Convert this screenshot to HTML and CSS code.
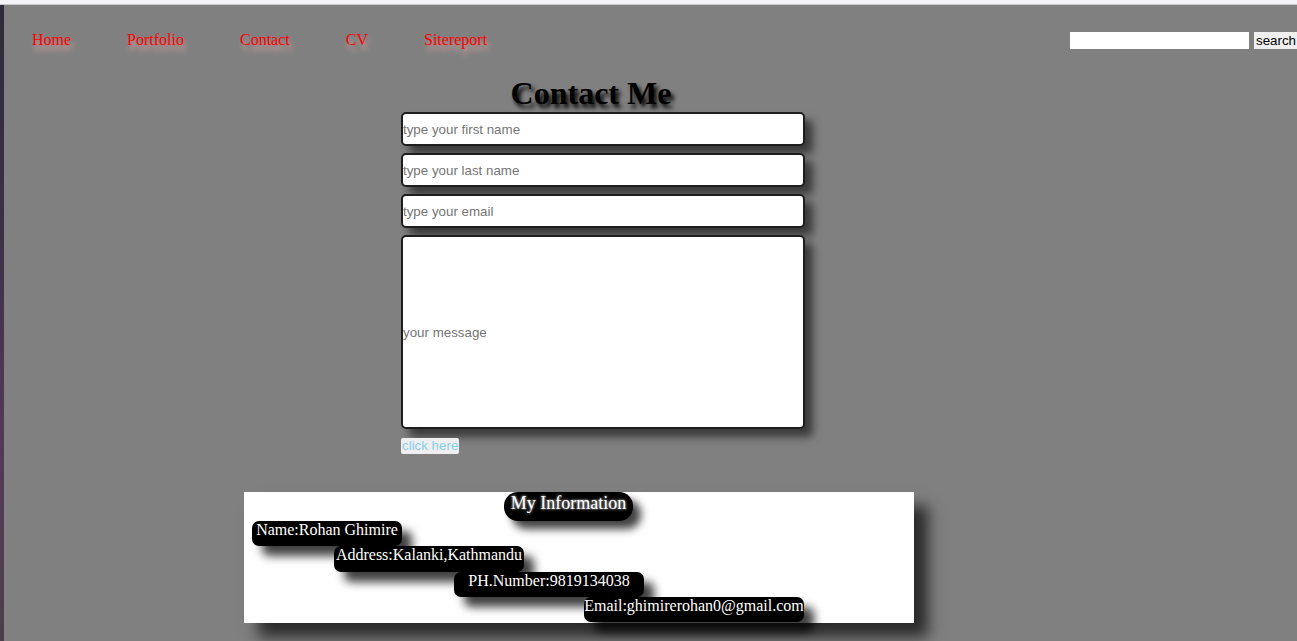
FILE: index.html
```html
<!DOCTYPE html>
<html>
<head>
<meta charset="utf-8">
<title>Contact Me</title>
<link rel="stylesheet" href="styles.css">
</head>
<body>
<div class="topstrip"></div>
<div class="page">
  <nav class="nav">
    <ul class="links">
      <li><a href="#">Home</a></li>
      <li><a href="#">Portfolio</a></li>
      <li><a href="#">Contact</a></li>
      <li><a href="#">CV</a></li>
      <li><a href="#">Sitereport</a></li>
    </ul>
    <form class="search">
      <input type="text" class="search-input">
      <button type="button" class="search-btn">search</button>
    </form>
  </nav>
  <section class="contact">
    <h1 class="title">Contact Me</h1>
    <form class="form">
      <input type="text" class="field" placeholder="type your first name">
      <input type="text" class="field" placeholder="type your last name">
      <input type="text" class="field" placeholder="type your email">
      <input type="text" class="field message" placeholder="your message">
      <button type="button" class="submit">click here</button>
    </form>
  </section>
  <section class="info">
    <div class="info-title">My Information</div>
    <div class="pill p-name">Name:Rohan Ghimire</div>
    <div class="pill p-addr">Address:Kalanki,Kathmandu</div>
    <div class="pill p-ph">PH.Number:9819134038</div>
    <div class="pill p-mail">Email:ghimirerohan0@gmail.com</div>
  </section>
</div>
</body>
</html>
```
FILE: styles.css
```css
html, body {
  margin: 0;
  padding: 0;
  height: 100%;
  overflow: hidden;
}
body {
  background: linear-gradient(180deg, #2f2a38 0%, #3a3145 35%, #533a56 70%, #4a4048 100%);
  font-family: "Liberation Serif", serif;
}
.topstrip {
  height: 4px;
  background: #f4f4f6;
  border-bottom: 1px solid #c9c9cc;
}
.page {
  margin-left: 4px;
  background: #808080;
  height: calc(100% - 5px);
  box-sizing: border-box;
  padding-top: 26px;
}
.nav {
  display: flex;
  align-items: center;
  justify-content: space-between;
}
.links {
  display: flex;
  list-style: none;
  margin: 0;
  padding: 0;
}
.links li {
  padding: 0 28px;
}
.links a {
  color: #ff0000;
  text-decoration: none;
  font-size: 16px;
  line-height: 18px;
  text-shadow: 2px 6px 5px #d8a0a0;
}
.search {
  display: flex;
  align-items: center;
  margin: 0;
}
.search-input {
  width: 179px;
  height: 17px;
  border: none;
  padding: 0;
  margin: 0 5px 0 0;
  background: #fff;
}
.search-btn {
  font-family: "Liberation Sans", Arial, sans-serif;
  font-size: 13.33px;
  height: 17px;
  padding: 0 1px 0 2px;
  border: none;
  background: #efefef;
  color: #000;
  line-height: 17px;
}
.contact {
  margin-top: 26px;
  padding-left: 397px;
}
.title {
  width: 380px;
  margin: 0;
  text-align: center;
  font-size: 32px;
  font-weight: bold;
  color: #000;
  text-shadow: 3px 4px 4px #000;
}
.form {
  display: flex;
  flex-direction: column;
  align-items: flex-start;
  gap: 7px;
  margin: 0;
}
.field {
  width: 404px;
  height: 34px;
  box-sizing: border-box;
  border: 2px solid #1e1e1e;
  border-radius: 5px;
  padding: 0;
  background: #fff;
  font-family: "Liberation Sans", Arial, sans-serif;
  font-size: 13.33px;
  box-shadow: 8px 8px 8px rgba(0, 0, 0, 0.55);
}
.field::placeholder {
  color: #757575;
}
.message {
  height: 194px;
}
.submit {
  margin-top: 2px;
  font-family: "Liberation Sans", Arial, sans-serif;
  font-size: 13.33px;
  height: 16px;
  line-height: 16px;
  padding: 0 1px;
  border: none;
  border-radius: 2px;
  background: #efefef;
  color: #87ceeb;
}
.info {
  margin: 38px 0 0 240px;
  width: 670px;
  height: 131px;
  background: #fff;
  box-shadow: 14px 14px 14px #2a2a2a;
  display: flex;
  flex-direction: column;
  align-items: flex-start;
}
.info-title {
  margin-left: 260px;
  width: 129px;
  height: 29px;
  line-height: 22px;
  box-sizing: border-box;
  text-align: center;
  background: #000;
  color: #fff;
  font-size: 18px;
  border-radius: 14px;
  text-shadow: 0 0 3px #fff;
  box-shadow: 8px 8px 8px rgba(0, 0, 0, 0.75);
}
.pill {
  height: 25px;
  line-height: 18px;
  font-size: 16px;
  color: #fff;
  background: #000;
  border-radius: 7px;
  text-align: center;
  white-space: nowrap;
  box-shadow: 10px 10px 10px rgba(0, 0, 0, 0.75);
}
.p-name { margin-left: 8px; width: 150px; }
.p-addr { margin-left: 90px; width: 190px; height: 26px; }
.p-ph { margin-left: 210px; width: 190px; }
.p-mail { margin-left: 340px; width: 220px; }
```
